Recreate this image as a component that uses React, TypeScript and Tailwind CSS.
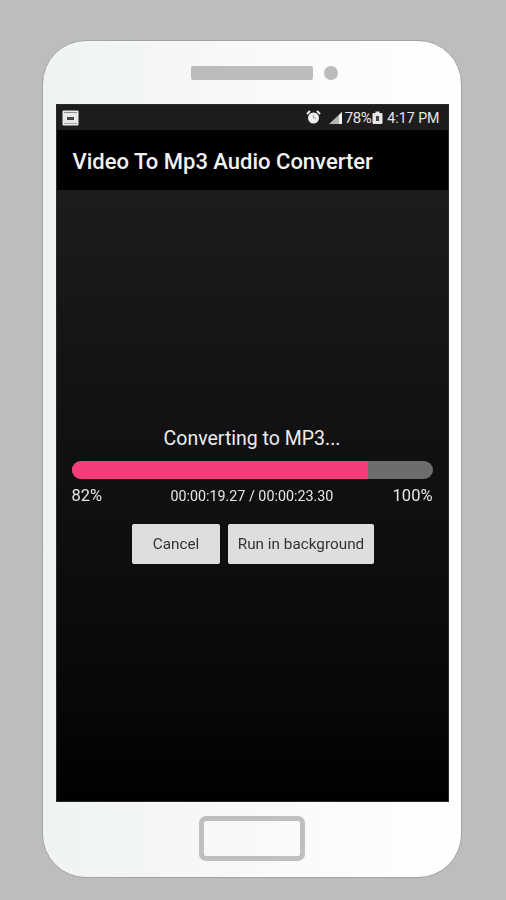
export default function App() {
  return (
    <div className="h-[900px] w-[506px] overflow-hidden bg-[#bdbdbd] pl-[42px] pt-[40px] font-['Roboto',sans-serif]">
      <div className="flex h-[838px] w-[420px] flex-col items-center rounded-[44px] border border-[#a3a3a3] bg-gradient-to-r from-[#f0f3f3] via-[#f8f9f9] to-white blur-[0.4px]">
        <div className="flex h-[63px] w-full items-center justify-center gap-[11px] pl-[25px] pt-[1px]">
          <div className="h-[14px] w-[122px] rounded-[2px] bg-[#bcbcbc]" />
          <div className="h-[14px] w-[14px] rounded-full bg-[#bcbcbc]" />
        </div>
        <div className="flex h-[698px] w-[393px] flex-col border border-[#2a2a2a] bg-black">
          <div className="flex h-[25px] items-center justify-between bg-[#1d1d1d] pl-[5px] pr-[8px] text-white">
            <svg width="17" height="16" viewBox="0 0 17 16">
              <rect x="0.5" y="0.5" width="16" height="15" rx="1" fill="#e8e8e8" />
              <rect x="2" y="2" width="13" height="1" fill="#8a8a8a" />
              <rect x="2" y="13" width="13" height="1" fill="#a5a5a5" />
              <rect x="5" y="7" width="7" height="3" fill="#444" />
            </svg>
            <div className="flex items-center">
              <svg width="15" height="15" viewBox="0 0 15 15" className="mr-[7px]">
                <circle cx="7.5" cy="8" r="5.5" fill="#f0f0f0" />
                <path d="M1 4 L4 1 M14 4 L11 1" stroke="#f0f0f0" strokeWidth="2" />
                <path d="M7.5 5 V8 H10" stroke="#999" strokeWidth="1" fill="none" />
              </svg>
              <svg width="15" height="14" viewBox="0 0 15 14" className="mr-[2px]">
                <path d="M1 13 L14 1 V13 Z" fill="#b5b5b5" />
                <path d="M11 4 L14 1 V13 H11 Z" fill="#f0f0f0" />
              </svg>
              <span className="text-[15px] leading-[20px] tracking-[-0.4px] text-[#e6e6e6]">78%</span>
              <svg width="11" height="14" viewBox="0 0 11 14" className="ml-[1px] mr-[4px]">
                <rect x="0.5" y="2" width="10" height="11" rx="1" fill="#e6e6e6" />
                <rect x="3.5" y="0.5" width="4" height="2" fill="#e6e6e6" />
                <rect x="4" y="5" width="3" height="5" fill="#444" />
              </svg>
              <span className="text-[14.2px] leading-[20px] text-[#e6e6e6]">4:17 PM</span>
            </div>
          </div>
          <div className="flex h-[60px] items-center bg-black pl-[16px] pt-[3px] text-[22px] font-medium leading-[28px] text-[#f2f2f2]">
            Video To Mp3 Audio Converter
          </div>
          <div className="flex flex-1 flex-col items-center bg-[linear-gradient(#1c1c1c_0%,#121212_35%,#0e0e0e_60%,#070707_85%,#000000_100%)] px-[15px] pt-[238px]">
            <div className="h-[22px] text-[19.5px] leading-[22px] text-[#ececec]">Converting to MP3...</div>
            <div className="mt-[11px] flex h-[18px] w-[361px] overflow-hidden rounded-full bg-[#6c6e6e]">
              <div className="h-full w-[296px] bg-[#f73d79]" />
            </div>
            <div className="mt-[8px] flex h-[18px] w-[361px] items-center justify-between text-[#e6e6e6]">
              <span className="text-[16.5px] leading-[18px]">82%</span>
              <span className="pl-[9px] text-[14.3px] leading-[18px]">00:00:19.27 / 00:00:23.30</span>
              <span className="text-[16.5px] leading-[18px]">100%</span>
            </div>
            <div className="ml-[2px] mt-[19px] flex gap-[8px]">
              <div className="flex h-[40px] w-[88px] items-center justify-center rounded-[2px] bg-[#dedede] text-[15.3px] text-[#333333]">Cancel</div>
              <div className="flex h-[40px] w-[146px] items-center justify-center rounded-[2px] bg-[#dedede] text-[15.3px] text-[#333333]">Run in background</div>
            </div>
          </div>
        </div>
        <div className="mt-[14px] h-[45px] w-[106px] rounded-[7px] border-[5px] border-[#bfbfbf]" />
      </div>
    </div>
  );
}
